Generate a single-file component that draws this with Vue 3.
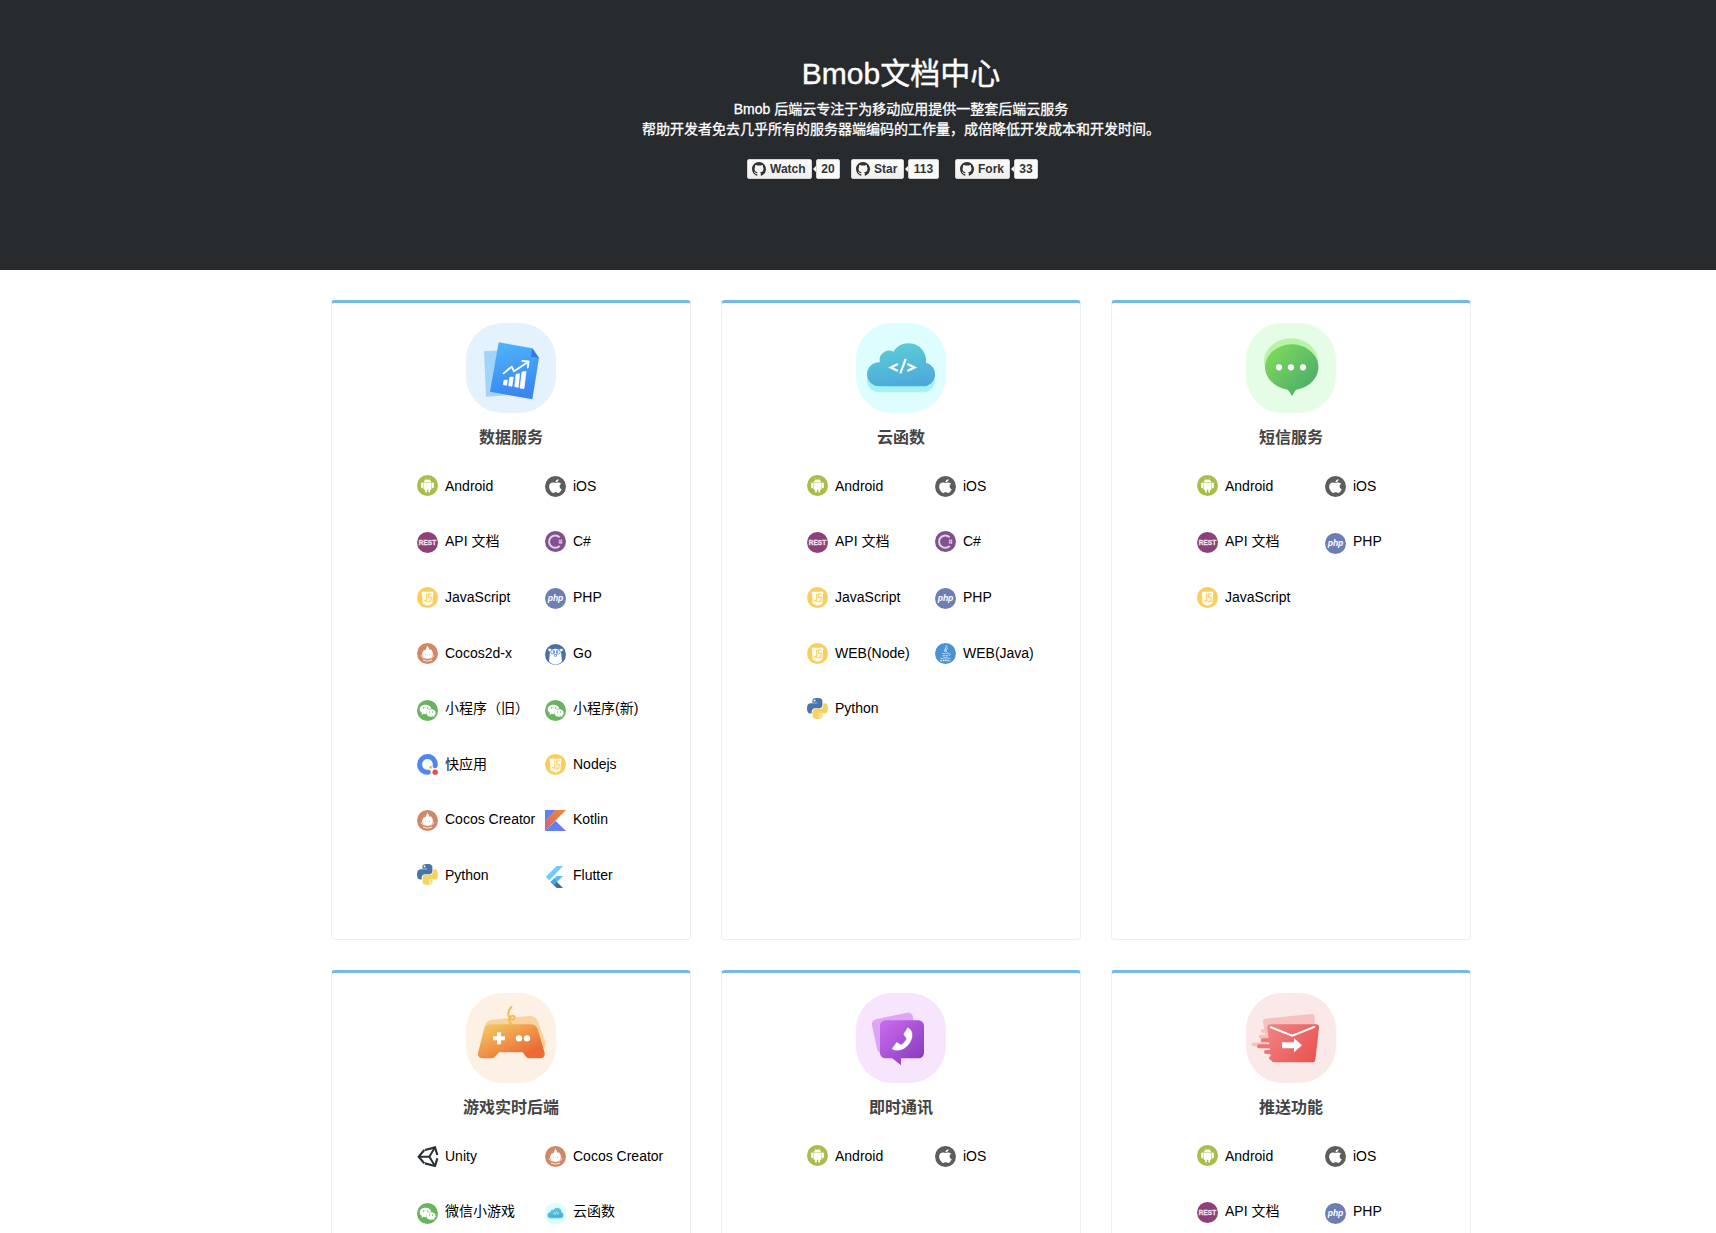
<script setup>
const repoButtons = [
  { label: 'Watch', count: '20', width: 65, countWidth: 24, gap: 11 },
  { label: 'Star', count: '113', width: 53, countWidth: 31, gap: 16 },
  { label: 'Fork', count: '33', width: 55, countWidth: 24, gap: 0 },
]

// Vertical nudge of each glyph against its row, in pixels.
const nudge = {
  android: 0, ios: 1, rest: 1.4, csharp: 0.4, js: 1, php: 2, cocos: 1, go: 2,
  wechat: 2.5, quick: 1.2, kotlin: 1.4, python: 0.2, flutter: 0.8, java: 0.8, unity: 1.2, cloudfn: 2.4,
}

const cards = [
  {
    title: '数据服务', art: 'data',
    items: [
      ['android', 'Android'], ['ios', 'iOS'], ['rest', 'API 文档'], ['csharp', 'C#'],
      ['js', 'JavaScript'], ['php', 'PHP'], ['cocos', 'Cocos2d-x'], ['go', 'Go'],
      ['wechat', '小程序（旧）'], ['wechat', '小程序(新)'], ['quick', '快应用'], ['js', 'Nodejs'],
      ['cocos', 'Cocos Creator'], ['kotlin', 'Kotlin'], ['python', 'Python'], ['flutter', 'Flutter'],
    ],
  },
  {
    title: '云函数', art: 'cloud',
    items: [
      ['android', 'Android'], ['ios', 'iOS'], ['rest', 'API 文档'], ['csharp', 'C#'],
      ['js', 'JavaScript'], ['php', 'PHP'], ['js', 'WEB(Node)'], ['java', 'WEB(Java)'],
      ['python', 'Python'],
    ],
  },
  {
    title: '短信服务', art: 'sms',
    items: [
      ['android', 'Android'], ['ios', 'iOS'], ['rest', 'API 文档'], ['php', 'PHP'],
      ['js', 'JavaScript'],
    ],
  },
  {
    title: '游戏实时后端', art: 'game',
    items: [
      ['unity', 'Unity'], ['cocos', 'Cocos Creator'], ['wechat', '微信小游戏'], ['cloudfn', '云函数'],
    ],
  },
  {
    title: '即时通讯', art: 'im',
    items: [['android', 'Android'], ['ios', 'iOS']],
  },
  {
    title: '推送功能', art: 'push',
    items: [
      ['android', 'Android'], ['ios', 'iOS'], ['rest', 'API 文档'], ['php', 'PHP'],
    ],
  },
]
</script>

<template>
  <div class="page">
    <svg class="lettered" aria-hidden="true">
      <symbol id="i-rest" viewBox="0 0 63 63">
        <circle cx="31.500" cy="31.500" r="31.500" fill="#8d4178" />
        <text x="31.500" y="38.500" text-anchor="middle" font-family="Liberation Sans, Arial, sans-serif" font-weight="700" font-size="20" fill="#f3e2ee" stroke="#f3e2ee" stroke-width="0.8" textLength="52" lengthAdjust="spacingAndGlyphs">REST</text>
      </symbol>
      <symbol id="i-php" viewBox="0 0 63 63">
        <circle cx="31.500" cy="31.500" r="31.500" fill="#6e7db4" />
        <text x="31.500" y="38" text-anchor="middle" font-family="Liberation Sans, Arial, sans-serif" font-weight="700" font-style="italic" font-size="25" fill="#fff" textLength="47" lengthAdjust="spacingAndGlyphs">php</text>
      </symbol>
    </svg>
    <svg class="sprite" aria-hidden="true">
      <defs>
        <linearGradient id="g-data" x1="0" y1="0" x2="0.2" y2="1"><stop offset="0" stop-color="#4fb6fa" /><stop offset="1" stop-color="#3a86f1" /></linearGradient>
        <linearGradient id="g-cloud" gradientUnits="userSpaceOnUse" x1="130" y1="64" x2="150" y2="190"><stop offset="0" stop-color="#5ccbd6" /><stop offset="1" stop-color="#4ca9da" /></linearGradient>
        <linearGradient id="g-sms" gradientUnits="userSpaceOnUse" x1="75" y1="85" x2="185" y2="190"><stop offset="0" stop-color="#7cd75e" /><stop offset="1" stop-color="#50b167" /></linearGradient>
        <linearGradient id="g-game" gradientUnits="userSpaceOnUse" x1="100" y1="90" x2="150" y2="196"><stop offset="0" stop-color="#f3c05d" /><stop offset="1" stop-color="#ed6c36" /></linearGradient>
        <linearGradient id="g-im" gradientUnits="userSpaceOnUse" x1="85" y1="85" x2="200" y2="200"><stop offset="0" stop-color="#c868ee" /><stop offset="1" stop-color="#883cbe" /></linearGradient>
        <linearGradient id="g-push" gradientUnits="userSpaceOnUse" x1="70" y1="95" x2="200" y2="205"><stop offset="0" stop-color="#ee8484" /><stop offset="1" stop-color="#ea5351" /></linearGradient>
        <linearGradient id="g-kot" x1="0" y1="1" x2="1" y2="0"><stop offset="0" stop-color="#c45fa0" /><stop offset="0.4" stop-color="#dd7455" /><stop offset="1" stop-color="#f08a35" /></linearGradient>
        <linearGradient id="g-kot2" x1="0" y1="0" x2="1" y2="0"><stop offset="0" stop-color="#4a8bef" /><stop offset="1" stop-color="#7a72f4" /></linearGradient>
      </defs>

      <symbol id="art-data" viewBox="0 0 270 270">
        <rect width="270" height="270" rx="110" fill="#e4f2fe" />
        <path d="M54 85 L110 82 L125 217 L60 221Z" fill="#a0d4f8" />
        <path d="M98 58 L199 76 L219 105 L199 229 L72 206Z" fill="url(#g-data)" />
        <path d="M199 76 L219 105 L195 101Z" fill="#3779df" />
        <path d="M113 151 L137 131 L144 145 L186 117 M169 114 L188 115 L185 134" fill="none" stroke="#fff" stroke-width="5.5" stroke-linejoin="round" stroke-linecap="round" />
        <path d="M114 172 L124 171 L122 187 L112 185Z M131 163 L142 162 L138 190 L128 188Z M150 154 L161 152 L157 193 L146 191Z M168 147 L180 145 L174 197 L162 195Z" fill="#fff" stroke="#fff" stroke-width="2" stroke-linejoin="round" />
      </symbol>

      <symbol id="art-cloud" viewBox="0 0 270 270">
        <rect width="270" height="270" rx="110" fill="#ddfdfe" />
        <rect x="33" y="136" width="204" height="72" rx="36" fill="#a6f1f6" />
        <path d="M69 190 A36 36 0 0 1 69 118 L72 118 A28 28 0 0 1 112 86 A53 53 0 0 1 210 119 A36 36 0 0 1 201 190Z" fill="url(#g-cloud)" />
        <path d="M126 123 L104 133.5 L126 144 M149 108 L133 151 M154 123 L176 133.5 L154 144" fill="none" stroke="#fff" stroke-width="6.5" />
      </symbol>

      <symbol id="art-sms" viewBox="0 0 270 270">
        <rect width="270" height="270" rx="110" fill="#e5fce6" />
        <ellipse cx="135" cy="114.500" rx="81" ry="68.500" fill="#b9f2a9" />
        <path d="M135 64 A81 68.500 0 0 1 150 200 Q145 205 138 220 Q132 206 125 200 A81 68.500 0 0 1 135 64Z" fill="url(#g-sms)" />
        <g fill="#fff"><circle cx="99" cy="133" r="9.300" /><circle cx="135" cy="133" r="9.300" /><circle cx="171" cy="133" r="9.300" /></g>
      </symbol>

      <symbol id="art-game" viewBox="0 0 270 270">
        <rect width="270" height="270" rx="110" fill="#fdf1e6" />
        <path d="M54 112 Q54 84 78 80 L190 69 Q207 68 215 84 L239 147 Q242 160 233 168 L200 160Z" fill="#f8d39f" />
        <path d="M136 42 C127 52 124 64 131 75 C138 84 147 79 146 72 C144 65 133 68 130 77 C128 86 133 92 139 96" fill="none" stroke="#f3bc58" stroke-width="6" stroke-linecap="round" />
        <path d="M78 94 H194 Q210 94 215 108 L236 180 Q238 196 222 196 H190 Q184 196 180 191 L170 178 H99 L88 190 Q83 196 77 196 H50 Q34 196 36 180 L54 108 Q60 94 78 94Z" fill="url(#g-game)" />
        <path d="M93 118 h12 v12 h12 v12 h-12 v12 h-12 v-12 h-12 v-12 h12Z" fill="#fff" />
        <circle cx="159" cy="136" r="9.500" fill="#fff" /><circle cx="183" cy="136" r="9.500" fill="#fff" />
      </symbol>

      <symbol id="art-im" viewBox="0 0 270 270">
        <rect width="270" height="270" rx="110" fill="#f6e5fc" />
        <path d="M60 79 L152 59 Q167 57 171 72 L178 110 V180 H78 Q66 180 63 168 L48 97 Q46 83 60 79Z" fill="#dea5f6" />
        <rect x="72" y="82" width="132" height="114" rx="16" fill="url(#g-im)" />
        <path d="M108 195 H135 V217Z" fill="#9f49cf" />
        <path d="M155 104 C166 109 170 119 168 132 C164 151 149 168 131 171 C122 173 113 171 108 167 L122 148 L135 156 C143 151 150 143 152 137 L143 124Z" fill="#fff" stroke="#fff" stroke-width="1" stroke-linejoin="round" />
      </symbol>

      <symbol id="art-push" viewBox="0 0 270 270">
        <rect width="270" height="270" rx="110" fill="#fbe9e9" />
        <g fill="#f5c1c1" stroke="#f5c1c1" stroke-linecap="round" stroke-width="11">
          <path d="M51 84 Q52 78 59 77 L196 63 Q206 62 206 72 V100 H80 V150 H60Z" stroke="none" />
          <path d="M50 114 H75 M44 131 H75 M22 154 H60" />
        </g>
        <path d="M50 142 H90 M39 160 H90 M60 177 H90 M75 195 H95" stroke="#ec7776" stroke-width="12" stroke-linecap="round" />
        <path d="M74 94 H210 Q220 94 219 104 L208 200 Q207 208 198 208 H84 Q76 208 75 199 L64 104 Q63 94 74 94Z" fill="url(#g-push)" />
        <path d="M72 102 L139 128 L207 101" fill="none" stroke="#fff" stroke-width="6" />
        <path d="M108 148 H144 V136 L168 157 L144 178 V166 H108Z" fill="#fff" />
      </symbol>

      <symbol id="i-android" viewBox="0 0 63 63">
        <circle cx="31.500" cy="31.500" r="31.500" fill="#a7be4c" />
        <g fill="#fff">
          <path d="M20 21 A12 10 0 0 1 43 21Z M19.500 22.500 H43.500 V42 Q43.500 44 41 44 H39 V51 Q36.500 54 34 51 V44 H29.500 V51 Q27 54 24.500 51 V44 H22 Q19.500 44 19.500 42Z" />
          <rect x="12.500" y="22.500" width="6" height="17" rx="3" /><rect x="44.500" y="22.500" width="6" height="17" rx="3" />
        </g>
        <path d="M24 9 l3 5 M39 9 l-3 5" stroke="#fff" stroke-width="1.500" />
      </symbol>

      <symbol id="i-ios" viewBox="0 0 63 63">
        <circle cx="31.500" cy="31.500" r="31.500" fill="#5d5d5d" />
        <path transform="translate(12 6.500) scale(.1 .092)" fill="#fff" d="M318.700 268.700c-.2-36.700 16.400-64.400 50-84.800-18.800-26.900-47.200-41.700-84.700-44.600-35.500-2.800-74.300 20.700-88.500 20.700-15 0-49.400-19.700-76.400-19.700C63.300 141.200 4 184.800 4 273.500q0 39.300 14.400 81.200c12.800 36.700 59 126.700 107.200 125.200 25.200-.6 43-17.900 75.800-17.900 31.800 0 48.300 17.900 76.400 17.900 48.600-.7 90.400-82.500 102.600-119.300-65.200-30.700-61.700-90-61.700-91.900zm-56.600-164.200c27.300-32.400 24.800-61.900 24-72.500-24.100 1.400-52 16.400-67.900 34.900-17.500 19.800-27.800 44.300-25.600 71.900 26.100 2 49.900-11.400 69.500-34.300z" />
      </symbol>

      <symbol id="i-csharp" viewBox="0 0 63 63">
        <circle cx="31.500" cy="31.500" r="31.500" fill="#81508f" />
        <path d="M44 19 A18.500 18.500 0 1 0 44 45" fill="none" stroke="#e2cfe6" stroke-width="6" />
        <path d="M44.500 25 v14 M49 25 v14 M41 29.500 h11 M41 35 h11" stroke="#e2cfe6" stroke-width="2.500" />
      </symbol>

      <symbol id="i-js" viewBox="0 0 63 63">
        <circle cx="31.500" cy="31.500" r="31.500" fill="#f8cf5e" />
        <path d="M14 14 H49 L46 50 L32 56 L17 50Z" fill="#fffaf0" />
        <path d="M29 20 V43 L21 40 M44 21 H35 V31 H43 L41.500 42 L33 45" fill="none" stroke="#f8cf5e" stroke-width="3.200" />
      </symbol>

      <symbol id="i-cocos" viewBox="0 0 63 63">
        <circle cx="31.500" cy="31.500" r="31.500" fill="#d18768" />
        <path d="M30 7 C33 14 37 14 38 21 L42 19 Q51 31 46 40 Q41 48 31.500 48 Q22 48 17 40 Q12 31 21 21 L24 23 Q30 17 30 7Z" fill="#fff" />
        <path d="M12 37 Q15 44 23 46 M51 37 Q48 44 40 46 M18 51 Q31.500 58 45 51" fill="none" stroke="#fff" stroke-width="2.500" />
        <circle cx="25" cy="34" r="1.600" fill="#e3b39f" /><circle cx="38" cy="34" r="1.600" fill="#e3b39f" />
      </symbol>

      <symbol id="i-go" viewBox="0 0 63 63">
        <circle cx="31.500" cy="31.500" r="31.500" fill="#4672a6" />
        <path d="M9 16 Q15 11 19 17 Q31.500 12 44 17 Q49 11 54 17 Q53 22 48 23 L51 52 Q46 60 31.500 62 Q17 60 12 52 L15 23 Q10 22 9 16Z" fill="#fff" />
        <g fill="none" stroke="#4672a6" stroke-width="2"><circle cx="23" cy="24" r="6" /><circle cx="40" cy="24" r="6" /><path d="M28 31 H35 L34 37 H29Z" /></g>
        <circle cx="25" cy="24" r="2" fill="#4672a6" /><circle cx="38" cy="24" r="2" fill="#4672a6" />
      </symbol>

      <symbol id="i-wechat" viewBox="0 0 63 63">
        <circle cx="31.500" cy="31.500" r="31.500" fill="#69b55f" />
        <path d="M26 14 C15 14 8 20 8 28 C8 33 11 37 15 39 L13 45 L20 41.500 Q24 43 28 42 C27 32 35 26 43 26 C42 19 35 14 26 14Z" fill="#fff" />
        <path d="M42 28 C33 28 28 33 28 39 C28 46 34 50 42 50 L47 49 L53 52 L51 47 C55 45 56 42 56 39 C56 33 50 28 42 28Z" fill="#fff" />
        <g fill="#69b55f"><circle cx="20" cy="24" r="2.500" /><circle cx="32" cy="24" r="2.500" /><circle cx="37.500" cy="36" r="2" /><circle cx="46.500" cy="36" r="2" /></g>
      </symbol>

      <symbol id="i-quick" viewBox="0 0 63 63">
        <path d="M34 54.500 A23.500 23.500 0 1 1 54.500 35" fill="none" stroke="#4e87f3" stroke-width="15" stroke-linecap="round" />
        <circle cx="41" cy="40" r="4.500" fill="#f6c445" /><circle cx="54.500" cy="54.500" r="8" fill="#ea4a48" />
      </symbol>

      <symbol id="i-kotlin" viewBox="0 0 63 63">
        <path d="M0 0 H32 L0 34Z" fill="url(#g-kot2)" />
        <path d="M31 0 H63 L0 63 V32Z" fill="url(#g-kot)" />
        <path d="M0 63 L31.500 32 L63 63Z" fill="url(#g-kot2)" />
      </symbol>

      <symbol id="i-python" viewBox="0 0 63 63">
        <g transform="translate(0 -4.500) scale(.1406)">
          <path fill="#f8d25d" d="M439.800 200.500c-7.700-30.900-22.300-54.200-53.400-54.200h-40.100v47.400c0 36.800-31.200 67.800-66.800 67.800H172.700c-29.200 0-53.400 25-53.400 54.300v101.800c0 29 25.200 46 53.400 54.300 33.800 9.900 66.300 11.700 106.800 0 26.900-7.800 53.400-23.500 53.400-54.300v-40.700H226.200v-13.600h160.200c31.100 0 42.600-21.700 53.400-54.200 11.200-33.500 10.700-65.700 0-108.600zM286.200 404c11.100 0 20.100 9.100 20.100 20.300 0 11.300-9 20.400-20.100 20.400-11 0-20.100-9.200-20.100-20.400.1-11.300 9.100-20.300 20.100-20.300z" />
          <path fill="#4875a6" d="M167.800 248.100h106.800c29.700 0 53.400-24.500 53.400-54.300V91.900c0-29-24.400-50.700-53.400-55.600-35.800-5.900-74.700-5.600-106.800.1-45.200 8-53.400 24.700-53.400 55.600v40.700h106.900v13.600h-147c-31.100 0-58.300 18.700-66.800 54.200-9.800 40.700-10.200 66.100 0 108.600 7.600 31.600 25.700 54.200 56.800 54.200H101v-48.800c0-35.300 30.500-66.400 66.800-66.400zm-6.700-142.600c-11.100 0-20.100-9.100-20.100-20.300.1-11.300 9-20.400 20.100-20.400 11 0 20.100 9.200 20.100 20.400s-9 20.300-20.100 20.300z" />
        </g>
      </symbol>

      <symbol id="i-flutter" viewBox="0 0 63 63" overflow="visible">
        <path d="M35 3 L2 36 L13 46 L54 3Z" fill="#6fcbfb" />
        <path d="M35 33 L17 51 L27 60 L54 33Z" fill="#5cbcf3" />
        <path d="M27 42 L17 51 L35 69 H54 L36 51Z" fill="#3a6ea5" />
        <path d="M17 51 L26.500 41.500 L36 51 L26.500 60Z" fill="#49a5e0" />
      </symbol>

      <symbol id="i-java" viewBox="0 0 63 63">
        <circle cx="31.500" cy="31.500" r="31.500" fill="#4c92cf" />
        <path d="M33 7 C38 14 25 18 31 27 M39 15 C31 19 33 23 35 27" fill="none" stroke="#fff" stroke-width="2.500" />
        <path d="M21 31 Q30 34 42 30 M22 37 Q31 40 40 37 M23 42 Q31 45 39 42 M42 31 Q50 32 42 39 M15 46 Q31 51 47 46" fill="none" stroke="#dcebf8" stroke-width="2" />
        <path d="M16 53 H46" stroke="#dcebf8" stroke-width="4" stroke-dasharray="5 2" />
      </symbol>

      <symbol id="i-unity" viewBox="0 0 63 63" overflow="visible">
        <g fill="none" stroke="#2b3033" stroke-width="6.500" stroke-linejoin="miter">
          <path d="M24 12 L54 4 L61 27 M61 37 L54 60 L24 52 M22 12 L5 32 L22 52" />
          <path d="M5 32 H37 L54 4 M37 32 L54 60" stroke-width="6" />
        </g>
      </symbol>

      <symbol id="i-cloudfn" viewBox="0 0 63 63">
        <use href="#art-cloud" width="63" height="63" />
      </symbol>

      <symbol id="i-github" viewBox="0 0 16 16">
        <path fill="#333" d="M8 0C3.580 0 0 3.580 0 8c0 3.540 2.290 6.530 5.470 7.590.4.070.550-.170.550-.380 0-.190-.010-.820-.010-1.490-2.010.370-2.530-.490-2.690-.940-.090-.230-.480-.940-.820-1.130-.280-.150-.680-.520-.010-.530.630-.010 1.080.580 1.230.820.720 1.210 1.870.870 2.330.660.070-.520.280-.870.510-1.070-1.780-.2-3.640-.890-3.640-3.950 0-.870.310-1.590.820-2.150-.080-.2-.360-1.020.080-2.120 0 0 .670-.210 2.200.820.640-.180 1.320-.270 2-.270s1.360.090 2 .270c1.530-1.040 2.200-.820 2.200-.820.440 1.100.160 1.920.080 2.120.510.560.820 1.270.820 2.150 0 3.070-1.870 3.750-3.650 3.950.290.250.540.730.540 1.480 0 1.070-.010 1.930-.010 2.200 0 .210.150.460.550.380A8.010 8.010 0 0 0 16 8c0-4.420-3.580-8-8-8z" />
      </symbol>
    </svg>

    <header class="hero">
      <h1>Bmob文档中心</h1>
      <p>Bmob 后端云专注于为移动应用提供一整套后端云服务<br />帮助开发者免去几乎所有的服务器端编码的工作量，成倍降低开发成本和开发时间。</p>
      <div class="repo">
        <div v-for="b in repoButtons" :key="b.label" class="repo-item" :style="{ marginRight: b.gap + 'px' }">
          <a class="btn" :style="{ width: b.width + 'px' }"><svg class="mark"><use href="#i-github" /></svg>{{ b.label }}</a>
          <a class="count" :style="{ width: b.countWidth + 'px' }">{{ b.count }}</a>
        </div>
      </div>
    </header>

    <main class="cards">
      <section v-for="c in cards" :key="c.title" class="card">
        <svg class="art"><use :href="'#art-' + c.art" /></svg>
        <h2>{{ c.title }}</h2>
        <ul>
          <li v-for="[icon, name] in c.items" :key="name">
            <svg class="icon" :style="{ marginTop: nudge[icon] + 'px' }"><use :href="'#i-' + icon" /></svg>
            <span>{{ name }}</span>
          </li>
        </ul>
      </section>
    </main>
  </div>
</template>

<style>
html,
body {
  margin: 0;
  overflow: hidden;
  background: #fff;
}
</style>

<style scoped>
.page {
  height: 1233px;
  overflow: hidden;
  font-family: "Liberation Sans", "Noto Sans CJK SC", sans-serif;
  font-size: 14px;
  color: #000;
}
.lettered {
  display: none;
}
.sprite {
  position: absolute;
  width: 0;
  height: 0;
}
.hero {
  box-sizing: border-box;
  height: 270px;
  padding: 54px 0 0 86px;
  background: #282b2e;
  color: #fff;
  text-align: center;
}
h1 {
  margin: 0;
  font-size: 30px;
  font-weight: 400;
  line-height: 40px;
  -webkit-text-stroke: 0.4px #fff;
}
.hero p {
  margin: 5px 0 0;
  font-size: 14px;
  font-weight: 400;
  line-height: 20px;
  -webkit-text-stroke: 0.3px #fff;
}
.repo {
  display: flex;
  margin: 20px 0 0 661px;
}
.repo-item {
  display: flex;
  gap: 4px;
  font-size: 12px;
  font-weight: 700;
  line-height: 18px;
  color: #333;
}
.btn,
.count {
  box-sizing: border-box;
  display: flex;
  align-items: center;
  height: 20px;
  border: 1px solid #d4d4d4;
  border-radius: 2px;
  white-space: nowrap;
}
.btn {
  padding-left: 4px;
  background: linear-gradient(#fcfcfc, #eee);
}
.mark {
  flex: none;
  width: 14px;
  height: 14px;
  margin-right: 4px;
}
.count {
  position: relative;
  justify-content: center;
  background: #fafafa;
}
.count::before {
  content: "";
  position: absolute;
  left: -4px;
  top: 6px;
  border: 3px solid transparent;
  border-left: 0;
  border-right-color: #fafafa;
}
.cards {
  display: grid;
  grid-template-columns: repeat(3, 360px);
  gap: 30px;
  padding: 30px 0 0 331px;
}
.card {
  box-sizing: border-box;
  height: 640px;
  border: 1px solid #eee;
  border-top: 3px solid #74b9e9;
  border-radius: 4px;
}
.art {
  display: block;
  width: 90px;
  height: 90px;
  margin: 20px auto 0;
}
h2 {
  margin: 13px 0 0;
  font-size: 16px;
  font-weight: 700;
  line-height: 24px;
  text-align: center;
  color: #444;
}
ul {
  display: grid;
  grid-template-columns: 128px 128px;
  grid-auto-rows: 55.6px;
  margin: 25px 0 0 85px;
  padding: 0;
  list-style: none;
}
li {
  display: flex;
  align-items: flex-start;
  white-space: nowrap;
}
.icon {
  flex: none;
  width: 21px;
  height: 21px;
  margin-right: 7px;
  overflow: visible;
}
li span {
  margin-top: 0.8px;
  line-height: 20px;
}
</style>
